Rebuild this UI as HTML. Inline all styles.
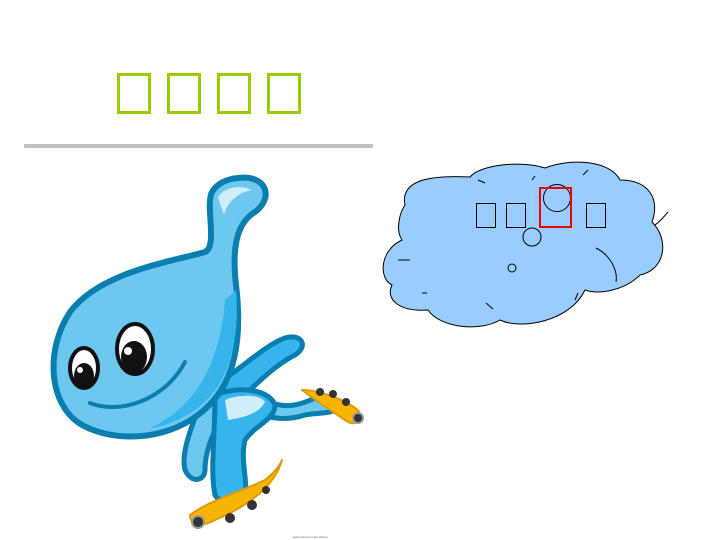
<!DOCTYPE html>
<html><head><meta charset="utf-8"><style>
html,body{margin:0;padding:0;background:#fff;width:720px;height:540px;overflow:hidden}
</style></head><body>
<svg width="720" height="540" viewBox="0 0 720 540" xmlns="http://www.w3.org/2000/svg">
<g fill="none" stroke="#99cc00" stroke-width="3">
<rect x="118.5" y="74.5" width="31" height="38"/>
<rect x="168.5" y="74.5" width="31" height="38"/>
<rect x="218.5" y="74.5" width="31" height="38"/>
<rect x="268.5" y="74.5" width="31" height="38"/>
</g>
<rect x="24" y="144" width="349" height="4" fill="#bfc1c4"/>
<!-- cloud -->
<path d="M405,205 C400,180 430,175 470,177 C480,165 520,160 545,168 C570,158 610,160 620,180 C650,180 660,200 652,222 C670,240 665,270 640,275 C625,290 600,295 585,290 C570,322 520,330 500,320 C480,332 440,328 428,310 C400,312 385,300 392,285 C378,278 380,250 402,240 C395,230 400,212 405,205 Z" fill="#99ccff" stroke="#000" stroke-width="1"/>
<g fill="none" stroke="#000" stroke-width="1">
<path d="M616,282 C618,270 610,255 596,248"/>
<path d="M655,225 C662,220 665,215 668,212"/>
<path d="M398,260 L410,260"/>
<path d="M478,180 L485,183"/>
<path d="M535,176 L532,180"/>
<path d="M588,170 L583,175"/>
<path d="M422,293 L427,293"/>
<path d="M486,303 L493,309"/>
<path d="M578,293 L575,300"/>
<rect x="476.5" y="203.5" width="19" height="24"/>
<rect x="506.5" y="203.5" width="19" height="24"/>
<rect x="586.5" y="203.5" width="19" height="24"/>
<circle cx="557" cy="198" r="13.5"/>
<circle cx="532" cy="237" r="9"/>
<circle cx="512" cy="268" r="4"/>
</g>
<rect x="540" y="188" width="31" height="39" fill="none" stroke="#e00" stroke-width="2"/>
<!-- mascot -->
<g stroke-linejoin="round">
<!-- legs/arms behind -->
<path d="M205,390 C195,420 180,450 185,470 C192,485 205,480 205,470 C205,450 215,425 230,405 Z" fill="#6cc8ef" stroke="#0b7eb0" stroke-width="5"/>
<path d="M215,385 C240,370 265,345 285,338 C300,333 310,345 295,355 C275,365 255,385 240,400 Z" fill="#35b5eb" stroke="#0b7eb0" stroke-width="5"/>
<path d="M265,400 C285,410 300,405 315,398 C325,395 335,398 340,405 C335,415 320,412 305,415 C290,420 270,420 260,412 Z" fill="#6cc8ef" stroke="#0b7eb0" stroke-width="5"/>
<path d="M215,395 C240,385 270,390 275,405 C275,420 255,425 245,440 C240,460 248,480 245,495 C240,505 220,505 215,495 C210,470 215,440 215,395 Z" fill="#35b5eb" stroke="#0b7eb0" stroke-width="5"/>
<path d="M225,400 C235,395 260,393 265,402 C258,415 240,418 228,420 Z" fill="#cfeefa"/>
<!-- skates -->
<path d="M190,515 C210,500 245,490 265,480 C275,472 280,465 282,460 C275,485 250,505 215,520 C200,528 190,525 190,515 Z" fill="#f7b500" stroke="#e09a00" stroke-width="2"/>
<circle cx="198" cy="522" r="6" fill="#333" stroke="#999" stroke-width="2"/>
<circle cx="230" cy="518" r="5" fill="#333"/>
<circle cx="252" cy="505" r="5" fill="#333"/>
<circle cx="266" cy="490" r="4" fill="#333"/>
<path d="M302,390 C320,390 345,400 358,410 C364,420 355,428 345,420 C330,410 315,400 302,390 Z" fill="#f7b500" stroke="#e09a00" stroke-width="2"/>
<circle cx="320" cy="392" r="4" fill="#333"/>
<circle cx="333" cy="394" r="4" fill="#333"/>
<circle cx="346" cy="402" r="4" fill="#333"/>
<circle cx="358" cy="418" r="5" fill="#333" stroke="#999" stroke-width="2"/>
<!-- head -->
<path d="M238,178 C268,174 275,200 252,214 C236,226 232,250 236,285 C242,335 238,385 198,415 C165,440 115,443 82,425 C48,405 45,350 70,312 C100,272 170,262 205,252 C218,246 205,205 212,192 C218,182 228,179 238,178 Z" fill="#6cc8ef" stroke="#0b7eb0" stroke-width="6"/>
<path d="M236,290 C240,340 230,385 195,410 C180,420 160,428 150,428 C190,410 220,370 225,300 Z" fill="#35b5eb"/>
<path d="M218,198 C222,188 240,184 252,190 C240,192 228,200 224,215 Z" fill="#cfeefa"/>
<!-- eyes -->
<ellipse cx="135" cy="349" rx="18" ry="25" fill="#fff" stroke="#111" stroke-width="4"/>
<ellipse cx="134" cy="357" rx="13" ry="16" fill="#111"/>
<circle cx="128" cy="351" r="4" fill="#fff"/>
<ellipse cx="84" cy="368" rx="14" ry="20" fill="#fff" stroke="#111" stroke-width="4"/>
<ellipse cx="84" cy="376" rx="10" ry="13" fill="#111"/>
<circle cx="80" cy="370" r="3" fill="#fff"/>
<path d="M90,403 C120,415 165,400 185,362" fill="none" stroke="#0b7eb0" stroke-width="4" stroke-linecap="round"/>
</g>
<text x="293" y="538" font-family="Liberation Sans, sans-serif" font-size="3" fill="#666">www.cnbomie.com      chinbe</text>
</svg>
</body></html>
